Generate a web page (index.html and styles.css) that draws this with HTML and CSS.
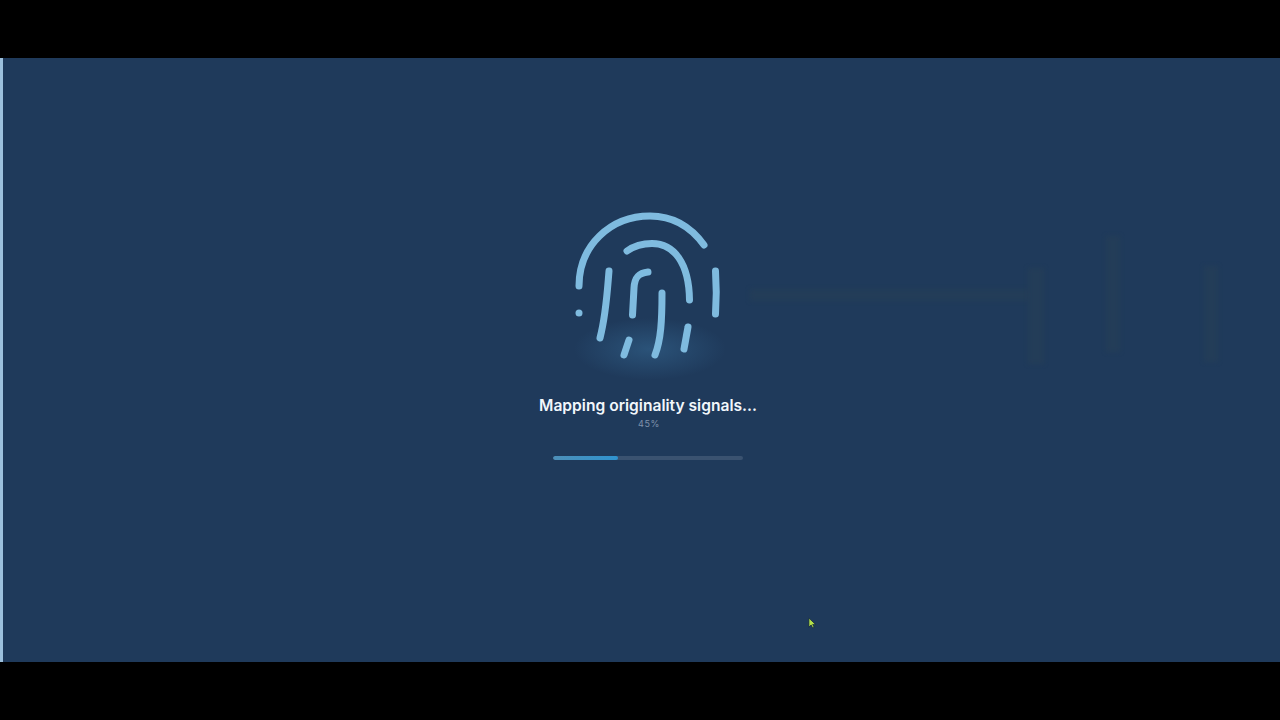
FILE: index.html
```html
<!DOCTYPE html>
<html lang="en">
<head>
    <meta charset="UTF-8">
    <meta name="viewport" content="width=device-width, initial-scale=1.0">
    <title>Mapping originality signals</title>
    <link rel="stylesheet" href="styles.css">
</head>
<body>
    <div class="letterbox"></div>

    <div class="stage">
        <div class="edge"></div>

        <main class="loader">
            <div class="print-wrap">
                <div class="print-glow"></div>
                <svg class="print" viewBox="0 0 180 180" width="180" height="180" fill="none" stroke="#7fbbdf" stroke-width="7" stroke-linecap="round">
                    <path d="M19 86C19 46 50 16 90 16C113 16 131 27 144 45"/>
                    <path d="M67 51C74 46 82 43.5 92 43.5C114 43.5 129 63 129.5 100"/>
                    <path d="M155.5 71C156.5 85 156.5 100 155.5 114"/>
                    <path d="M49 71C47 95 46 115 40 138"/>
                    <path d="M88 72C78 73 74.5 78 74 88L72.5 115"/>
                    <path d="M102 93C102 120 101 140 95 155"/>
                    <path d="M69 140L64 155"/>
                    <path d="M128 127L124 149"/>
                    <circle cx="19" cy="113" r="3.5" fill="#7fbbdf" stroke="none"/>
                </svg>
            </div>
            <h1 class="status">Mapping originality signals...</h1>
            <div class="percent">45%</div>
            <div class="track"><div class="fill" style="width: 34%"></div></div>
        </main>

        <!-- faint leftovers of the page behind the overlay -->
        <div class="ghost ghost-line"></div>
        <div class="ghost ghost-a"></div>
        <div class="ghost ghost-b"></div>
        <div class="ghost ghost-c"></div>

        <svg class="cursor" viewBox="0 0 10 14" width="9" height="13">
            <path d="M1 1L1 11L3.5 8.6L5.2 12L6.8 11.2L5.2 8L8.4 8Z" fill="#b5e04a" stroke="#10243a" stroke-width="0.8"/>
        </svg>
    </div>

    <div class="letterbox"></div>
</body>
</html>
```

FILE: styles.css
```css
html, body { height: 100%; }
body { margin: 0; background: #000; display: flex; flex-direction: column; font-family: Inter, "Liberation Sans", sans-serif; overflow: hidden; }
.letterbox { height: 58px; background: #000; flex: none; }
.stage { flex: 1; position: relative; display: flex; background: #1f3a5b; }
.edge { width: 3px; background: #9cc0dc; flex: none; }
.loader { flex: 1; padding: 142px 0 0 13px; display: flex; flex-direction: column; align-items: center; }
.print-wrap { position: relative; width: 180px; height: 180px; margin-left: 4px; }
.print { display: block; position: relative; }
.print-glow { position: absolute; left: 14px; top: 118px; width: 152px; height: 62px; border-radius: 50%; background: radial-gradient(closest-side, rgba(70, 140, 190, 0.3), rgba(70, 140, 190, 0)); }
.status { margin: 15px 0 0; font-size: 15.6px; line-height: 22px; font-weight: 600; color: #f2f7fb; white-space: nowrap; }
.percent { margin: 1px 0 0 2px; font-size: 9px; line-height: 12px; letter-spacing: 0.6px; color: #7f93ac; }
.track { margin-top: 26px; width: 190px; height: 4px; border-radius: 2px; background: #3a5270; overflow: hidden; }
.fill { height: 100%; border-radius: 2px; background: linear-gradient(90deg, #4d8fb8, #2f93cf); }
.ghost { position: absolute; background: #233d58; filter: blur(2px); }
.ghost-line { left: 750px; top: 231px; width: 280px; height: 12px; }
.ghost-a { left: 1028px; top: 210px; width: 16px; height: 96px; }
.ghost-b { left: 1106px; top: 178px; width: 14px; height: 116px; }
.ghost-c { left: 1204px; top: 208px; width: 14px; height: 96px; }
.cursor { position: absolute; left: 808px; top: 559px; }
```
